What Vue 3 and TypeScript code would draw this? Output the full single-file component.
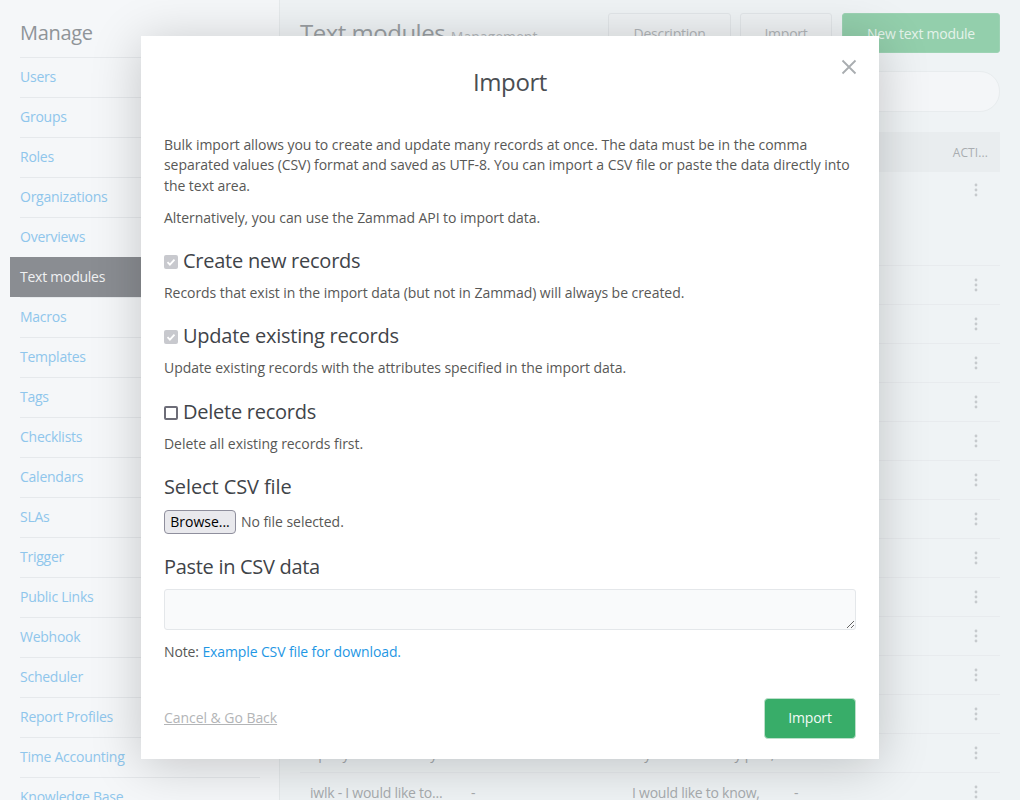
<script setup lang="ts">
const manageItems = [
  'Users', 'Groups', 'Roles', 'Organizations', 'Overviews', 'Text modules', 'Macros', 'Templates',
  'Tags', 'Checklists', 'Calendars', 'SLAs', 'Trigger', 'Public Links', 'Webhook', 'Scheduler',
  'Report Profiles', 'Time Accounting', 'Knowledge Base',
]

const rows = [
  ...Array.from({ length: 12 }, () => ({ name: '', remark: '', content: '', group: '' })),
  { name: 'upday - Thanks for your', remark: '-', content: 'My thanks for my part,', group: '-' },
  { name: 'iwlk - I would like to...', remark: '-', content: 'I would like to know,', group: '-' },
]

const importOptions = [
  { label: 'Create new records', help: 'Records that exist in the import data (but not in Zammad) will always be created.', checked: true },
  { label: 'Update existing records', help: 'Update existing records with the attributes specified in the import data.', checked: true },
  { label: 'Delete records', help: 'Delete all existing records first.', checked: false },
]
</script>

<template>
  <div class="page">
    <aside class="sidebar">
      <h2>Manage</h2>
      <a
        v-for="item in manageItems"
        :key="item"
        class="side-item"
        :class="item === 'Text modules' && 'active'"
      ><span>{{ item }}</span></a>
    </aside>

    <main class="content">
      <header class="page-head">
        <h1>Text modules <small>Management</small></h1>
        <div class="head-actions">
          <button class="ghost desc">Description</button>
          <button class="ghost imp">Import</button>
          <button class="primary-dim">New text module</button>
        </div>
      </header>
      <div class="search"></div>
      <div class="table-head"><span>ACTI...</span></div>
      <div class="row first">
        <svg class="dots" width="4" height="14" viewBox="0 0 4 14"><circle cx="2" cy="2" r="1.4"/><circle cx="2" cy="7" r="1.4"/><circle cx="2" cy="12" r="1.4"/></svg>
      </div>
      <div v-for="(row, i) in rows" :key="i" class="row">
        <span class="cell name">{{ row.name }}</span>
        <span class="cell remark">{{ row.remark }}</span>
        <span class="cell body">{{ row.content }}</span>
        <span class="cell group">{{ row.group }}</span>
        <svg class="dots" width="4" height="14" viewBox="0 0 4 14"><circle cx="2" cy="2" r="1.4"/><circle cx="2" cy="7" r="1.4"/><circle cx="2" cy="12" r="1.4"/></svg>
      </div>
    </main>

    <section class="modal">
      <button class="close" aria-label="Close">
        <svg width="16" height="16" viewBox="0 0 16 16"><path d="M1.5 1.5l13 13M14.500 1.500l-13 13"/></svg>
      </button>
      <h3 class="modal-title">Import</h3>

      <p class="intro">Bulk import allows you to create and update many records at once. The data must be in the comma separated values (CSV) format and saved as UTF-8. You can import a CSV file or paste the data directly into the text area.</p>
      <p class="intro alt">Alternatively, you can use the Zammad API to import data.</p>

      <div v-for="opt in importOptions" :key="opt.label" class="option">
        <label>
          <span class="check" :class="opt.checked && 'on'">
            <svg v-if="opt.checked" width="10" height="10" viewBox="0 0 10 10"><path d="M1.500 5.200l2.400 2.400 4.600-5"/></svg>
          </span>
          {{ opt.label }}
        </label>
        <p>{{ opt.help }}</p>
      </div>

      <h4 class="field-title">Select CSV file</h4>
      <div class="file-row">
        <button class="browse">Browse...</button>
        <span>No file selected.</span>
      </div>

      <h4 class="field-title paste">Paste in CSV data</h4>
      <textarea class="csv"></textarea>
      <p class="csv-note">Note: <a>Example CSV file for download.</a></p>

      <footer class="modal-foot">
        <a class="cancel">Cancel &amp; Go Back</a>
        <button class="submit">Import</button>
      </footer>
    </section>
  </div>
</template>

<style>
html, body {
  margin: 0;
  background: #f0f3f5;
}
</style>

<style scoped>
.page {
  position: relative;
  width: 1020px;
  height: 800px;
  overflow: hidden;
  display: flex;
  font-family: "Open Sans", "Noto Sans", sans-serif;
  font-size: 14px;
  letter-spacing: -0.25px;
  color: #585856;
}

.sidebar {
  flex: 0 0 280px;
  box-sizing: border-box;
  padding: 0 19px 0 10px;
  background: #f5f7f9;
  border-right: 1px solid #e6eaec;
}
.sidebar h2 {
  margin: 0;
  padding: 18px 0 0 10px;
  height: 39px;
  font-size: 20px;
  line-height: 30px;
  font-weight: 400;
  letter-spacing: -0.3px;
  color: #8f9498;
}
.side-item {
  display: block;
  height: 40px;
  line-height: 37px;
  color: #8fc6ec;
}
.side-item span {
  display: block;
  margin-left: 10px;
  border-top: 1px solid #e6e9ec;
  height: 39px;
}
.side-item.active {
  background: #8a8d92;
  color: #f0f1f2;
}
.side-item.active span {
  border-top-color: transparent;
}

.content {
  flex: 1;
  min-width: 0;
  padding: 0 20px;
  background: #eff3f5;
}
.page-head {
  display: flex;
  justify-content: space-between;
  height: 71px;
  box-sizing: border-box;
  padding-top: 13px;
}
.page-head h1 {
  margin: 4px 0 0;
  font-size: 24px;
  line-height: 32px;
  font-weight: 400;
  letter-spacing: -0.5px;
  color: #9a9fa3;
}
.page-head small {
  font-size: 14px;
  letter-spacing: 0;
  color: #b4b8bb;
}
.head-actions {
  display: flex;
  gap: 9px;
  height: 40px;
}
.head-actions button {
  font: inherit;
  letter-spacing: inherit;
  border-radius: 3px;
  padding: 0;
}
.ghost {
  background: #eff2f4;
  border: 1px solid #e2e6e9;
  color: #b2b6b9;
}
.desc {
  width: 123px;
}
.imp {
  width: 92px;
}
.primary-dim {
  width: 158px;
  margin-left: 1px;
  background: #93cfac;
  border: 1px solid #9dd3b4;
  color: #e4f3ea;
}
.search {
  height: 41px;
  box-sizing: border-box;
  background: #f4f6f8;
  border: 1px solid #e8ecee;
  border-radius: 20px;
}
.table-head {
  display: flex;
  justify-content: flex-end;
  align-items: center;
  margin-top: 20px;
  height: 40px;
  padding-right: 12px;
  background: #e9edef;
  font-size: 12px;
  letter-spacing: 0.1px;
  color: #a9adb1;
}
.row {
  display: flex;
  align-items: center;
  height: 39px;
  box-sizing: border-box;
  border-bottom: 1px solid #e8ebee;
  color: #a7abae;
  line-height: 20px;
}
.row.first {
  height: 94px;
  align-items: flex-start;
  justify-content: flex-end;
  padding-top: 11px;
}
.cell {
  flex: none;
  overflow: hidden;
  white-space: nowrap;
  padding-top: 2px;
  height: 20px;
}
.name {
  width: 161px;
  padding-left: 10px;
}
.remark {
  width: 161px;
}
.body {
  width: 162px;
}
.group {
  width: 60px;
}
.dots {
  margin-left: auto;
  margin-right: 22px;
  fill: #c6cacd;
}

.modal {
  position: absolute;
  left: 141px;
  top: 36px;
  width: 738px;
  height: 723px;
  box-sizing: border-box;
  padding: 0 23px;
  background: #fff;
  box-shadow: 0 6px 48px rgba(0, 0, 0, 0.2);
  letter-spacing: -0.05px;
}
.close {
  position: absolute;
  top: 23px;
  right: 22px;
  padding: 0;
  width: 16px;
  height: 16px;
  background: none;
  border: 0;
}
.close svg {
  display: block;
  fill: none;
  stroke: #a9adb0;
  stroke-width: 1.8;
}
.modal-title {
  margin: 0;
  padding-top: 28px;
  height: 70px;
  box-sizing: border-box;
  text-align: center;
  font-size: 24px;
  line-height: 36px;
  font-weight: 400;
  letter-spacing: -0.4px;
  color: #4a4e52;
}
.intro {
  margin: 0;
  padding-top: 29px;
  line-height: 20.4px;
}
.intro.alt {
  padding-top: 11.800px;
  margin-bottom: 18px;
}
.option {
  margin-bottom: 18.800px;
}
.option label {
  display: flex;
  align-items: center;
  gap: 5px;
  height: 28px;
  font-size: 20px;
  letter-spacing: -0.25px;
  color: #3f4449;
}
.option p {
  margin: 8.600px 0 0;
  line-height: 20px;
}
.check {
  flex: none;
  width: 14px;
  height: 14px;
  margin-top: 3px;
  box-sizing: border-box;
  border: 2px solid #6d6d78;
  border-radius: 2px;
  background: #fff;
}
.check.on {
  display: flex;
  align-items: center;
  justify-content: center;
  border: 0;
  background: #c8c9ce;
}
.check svg {
  fill: none;
  stroke: #fff;
  stroke-width: 1.800;
}
.field-title {
  margin: 0;
  height: 28px;
  line-height: 28px;
  font-size: 20px;
  font-weight: 400;
  letter-spacing: -0.1px;
  color: #3f4449;
}
.field-title.paste {
  margin-top: 19px;
  letter-spacing: -0.3px;
}
.file-row {
  display: flex;
  align-items: center;
  gap: 5px;
  height: 24px;
  margin-top: 9px;
}
.browse {
  width: 72px;
  height: 24px;
  padding: 0;
  font: inherit;
  letter-spacing: 0;
  color: #000;
  background: #e9e9ed;
  border: 1px solid #8f8f9d;
  border-radius: 4px;
}
.csv {
  display: block;
  width: 100%;
  height: 41px;
  margin-top: 8px;
  box-sizing: border-box;
  background: #f9fafb;
  border: 1px solid #e4e7ea;
  border-radius: 3px;
  outline: none;
}
.csv-note {
  margin: 12px 0 0;
  line-height: 20px;
  letter-spacing: -0.12px;
}
.csv-note a {
  color: #1f97e4;
}
.modal-foot {
  display: flex;
  justify-content: space-between;
  align-items: center;
  margin-top: 36px;
}
.cancel {
  margin-top: -2px;
  color: #b3b5b7;
  text-decoration: underline;
}
.submit {
  width: 92px;
  height: 41px;
  padding: 0 0 2px;
  font: inherit;
  letter-spacing: -0.2px;
  color: #f2faf5;
  background: #38ad69;
  border: 1px solid #bcdfca;
  border-radius: 4px;
}
</style>
